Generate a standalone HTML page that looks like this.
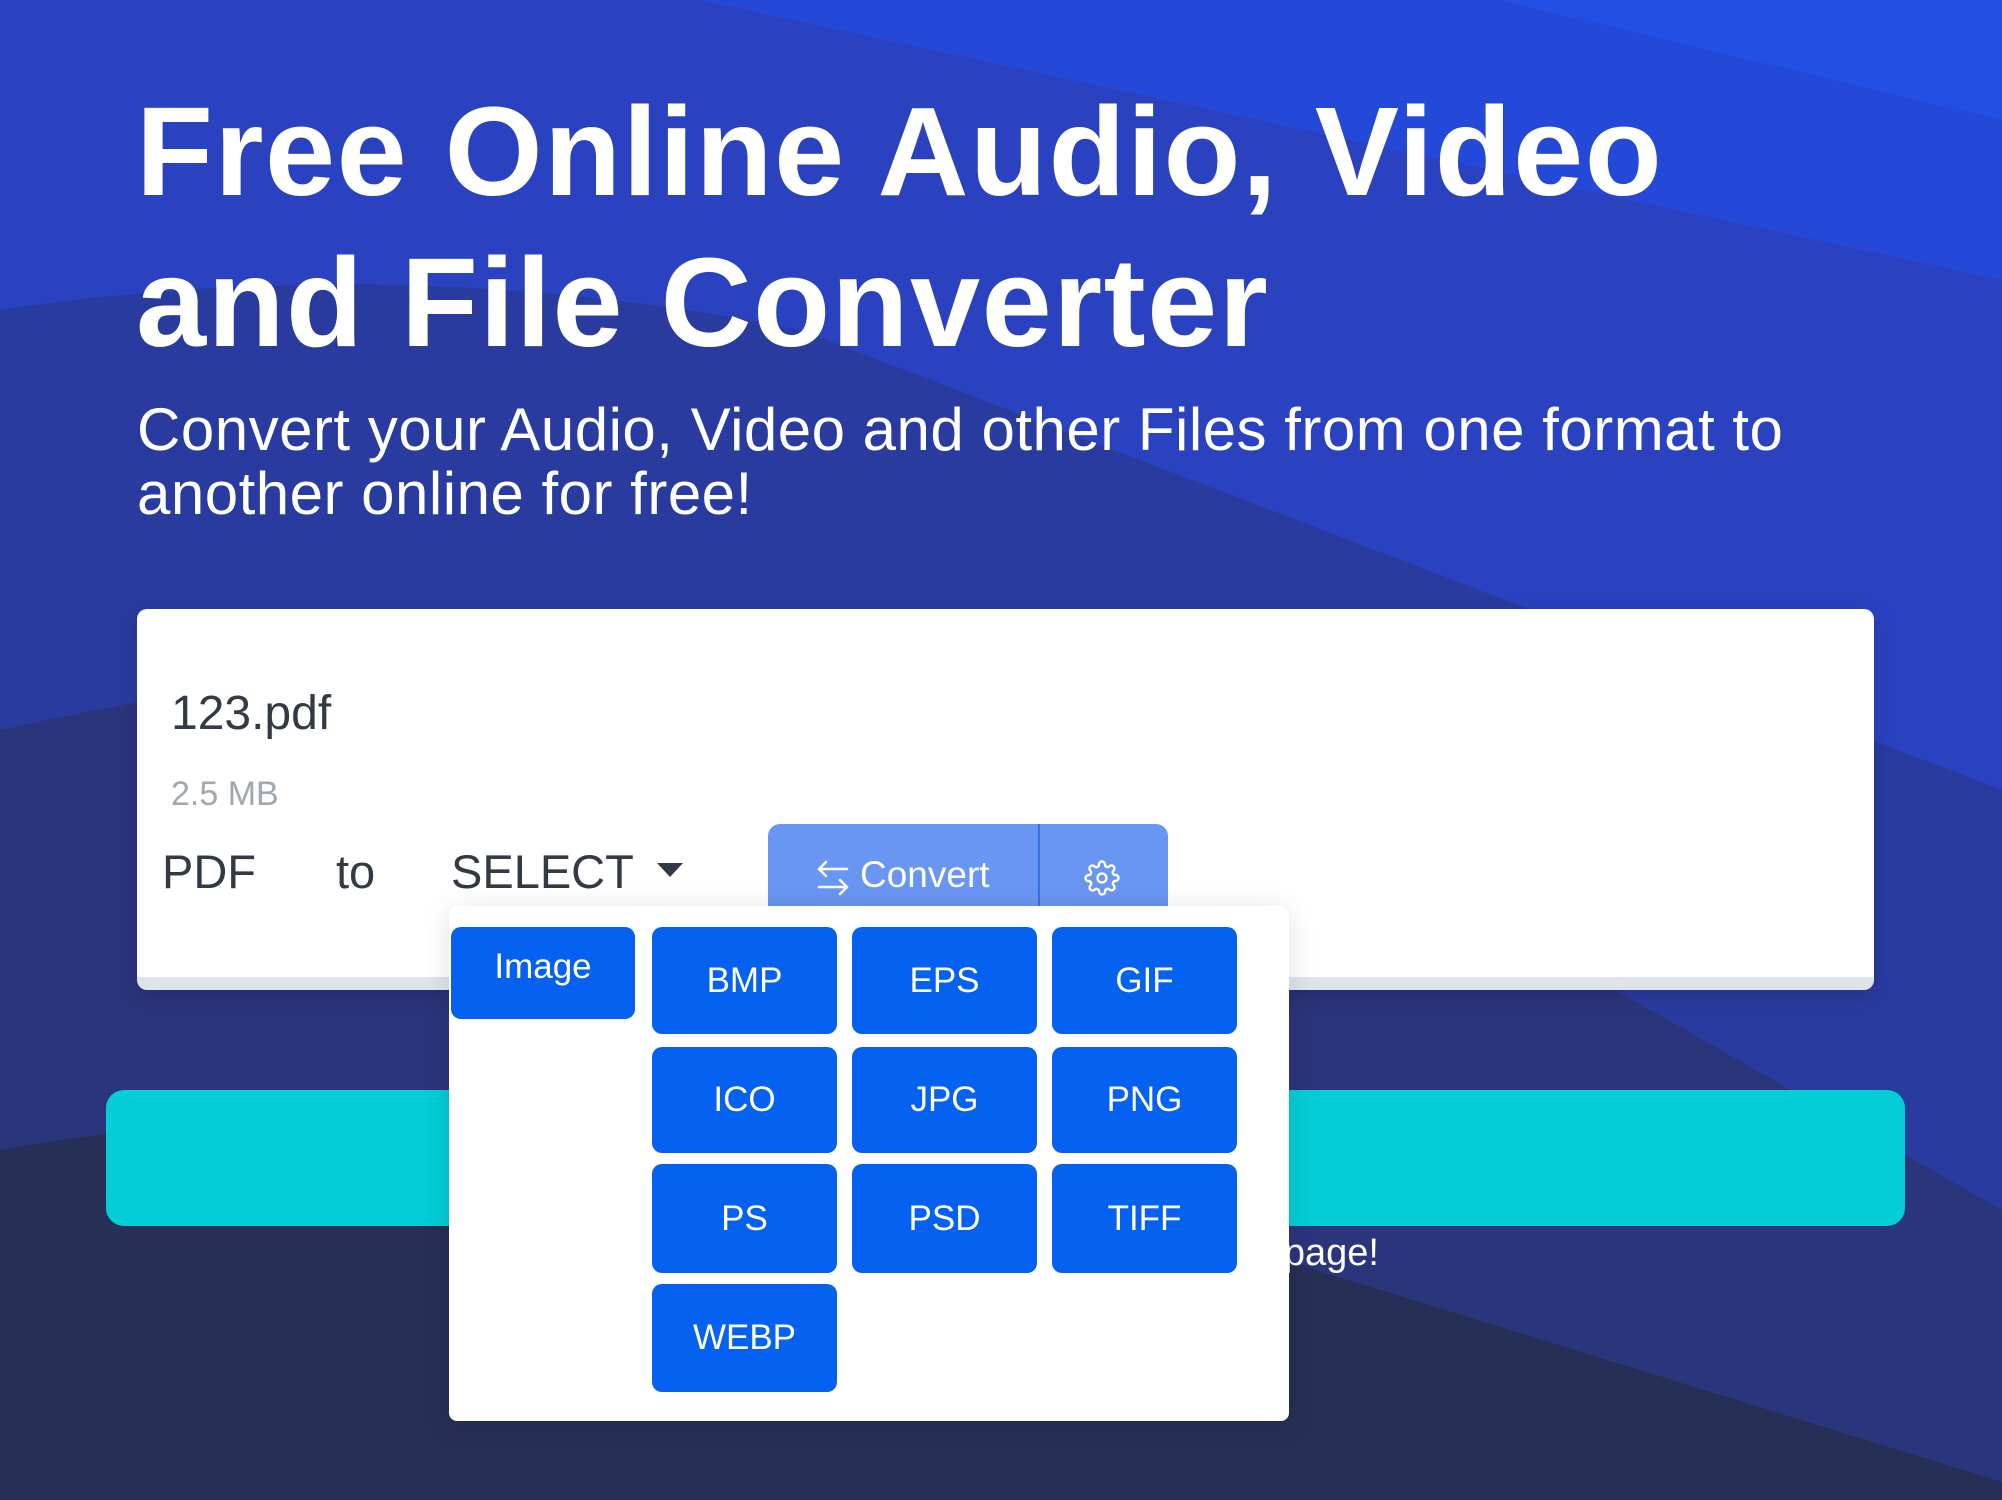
<!DOCTYPE html>
<html><head><meta charset="utf-8"><style>
*{margin:0;padding:0;box-sizing:border-box}
body{width:2002px;height:1500px;overflow:hidden;position:relative;font-family:"Liberation Sans",sans-serif;background:#2b357b}
.bg{position:absolute;left:0;top:0}
.abs{position:absolute}
h1{position:absolute;left:136px;top:76px;color:#fff;font-size:126px;font-weight:bold;line-height:151px;letter-spacing:1.5px;white-space:nowrap}
.sub{position:absolute;left:137px;top:398px;color:#fff;font-size:60px;line-height:64px;letter-spacing:0.5px;white-space:nowrap}
.card{position:absolute;left:137px;top:609px;width:1737px;height:381px;background:#fff;border-radius:10px;border-bottom:13px solid #dfe3ea;box-shadow:0 6px 20px rgba(0,0,0,.15)}
.t{position:absolute;color:#333a44;white-space:nowrap}
.btn{position:absolute;background:#0561f0;color:#fff;border-radius:10px;display:flex;align-items:center;justify-content:center;font-size:35px}
</style></head><body>
<svg class="bg" width="2002" height="1500">
<rect width="2002" height="1500" fill="#2b357b"/>
<path d="M0,730 Q500,620 1000,640 L2002,1210 L2002,0 L0,0Z" fill="#293b9f"/>
<path d="M0,310 Q400,250 800,330 L2002,790 L2002,0 L0,0Z" fill="#2a42bf"/>
<path d="M700,0 L2002,0 L2002,280 Z" fill="#2449d9"/>
<path d="M1500,0 L2002,0 L2002,120 Z" fill="#234fe3"/>
<path d="M0,1150 Q400,1080 1000,1130 L1290,1262 L2002,1482 L2002,1500 L0,1500Z" fill="#262f55"/>
</svg>
<h1>Free Online Audio, Video<br>and File Converter</h1>
<div class="sub">Convert your Audio, Video and other Files from one format to<br>another online for free!</div>
<div class="abs" style="right:623px;top:1232px;color:#fff;font-size:38px;white-space:nowrap">Bookmark this page!</div>
<div class="abs" style="left:106px;top:1090px;width:1799px;height:136px;background:#03cdd6;border-radius:18px"></div>
<div class="card">
<div class="t" style="left:34px;top:77px;font-size:48px">123.pdf</div>
<div class="t" style="left:34px;top:166px;font-size:34px;color:#a0a8b0">2.5 MB</div>
<div class="t" style="left:25px;top:235px;font-size:47px">PDF</div>
<div class="t" style="left:199px;top:235px;font-size:47px">to</div>
<div class="t" style="left:314px;top:235px;font-size:47px">SELECT</div>
<svg class="abs" style="left:520px;top:254px" width="26" height="14"><path d="M0,0H26L13,14Z" fill="#333a44"/></svg>
<div class="abs" style="left:631px;top:215px;width:400px;height:100px;background:#6a96f3;border-radius:12px 12px 0 0">
<div class="abs" style="left:270px;top:0;width:2px;height:100px;background:#3a6fe8"></div>
<svg class="abs" style="left:48px;top:36px" width="34" height="36" fill="none" stroke="#fff" stroke-width="2.5" stroke-linecap="round" stroke-linejoin="round"><path d="M10,2L3,9L10,16M3,9H31M24,20L31,27L24,34M31,27H3"/></svg>
<div class="abs" style="left:92px;top:30px;color:#fff;font-size:37px">Convert</div>
<svg class="abs" style="left:316px;top:36px" width="36" height="36" viewBox="0 0 24 24" fill="none" stroke="#fff" stroke-width="1.6"><circle cx="12" cy="12" r="3"/><path d="M19.4 15a1.65 1.65 0 0 0 .33 1.820l.06.06a2 2 0 1 1-2.83 2.83l-.06-.06a1.65 1.65 0 0 0-1.82-.33 1.65 1.65 0 0 0-1 1.51V21a2 2 0 1 1-4 0v-.09A1.65 1.65 0 0 0 9 19.4a1.650 1.65 0 0 0-1.82.33l-.06.06a2 2 0 1 1-2.83-2.83l.06-.06a1.65 1.65 0 0 0 .33-1.82 1.65 1.65 0 0 0-1.51-1H3a2 2 0 1 1 0-4h.09A1.65 1.65 0 0 0 4.6 9a1.65 1.65 0 0 0-.33-1.82l-.06-.06a2 2 0 1 1 2.83-2.83l.06.06a1.65 1.65 0 0 0 1.82.33H9a1.65 1.65 0 0 0 1-1.51V3a2 2 0 1 1 4 0v.09a1.65 1.65 0 0 0 1 1.51 1.65 1.65 0 0 0 1.820-.33l.06-.06a2 2 0 1 1 2.83 2.83l-.06.06a1.65 1.65 0 0 0-.33 1.82V9a1.65 1.65 0 0 0 1.51 1H21a2 2 0 1 1 0 4h-.09a1.65 1.65 0 0 0-1.51 1z"/></svg>
</div>
</div>
<div class="abs" style="left:449px;top:906px;width:840px;height:515px;background:#fff;border-radius:8px;box-shadow:0 4px 30px rgba(0,0,0,.12)"></div>
<div class="btn" style="left:451px;top:927px;width:184px;height:92px;padding-bottom:12px">Image</div>
<div class="btn" style="left:652px;top:927px;width:185px;height:107px">BMP</div>
<div class="btn" style="left:852px;top:927px;width:185px;height:107px">EPS</div>
<div class="btn" style="left:1052px;top:927px;width:185px;height:107px">GIF</div>
<div class="btn" style="left:652px;top:1047px;width:185px;height:106px">ICO</div>
<div class="btn" style="left:852px;top:1047px;width:185px;height:106px">JPG</div>
<div class="btn" style="left:1052px;top:1047px;width:185px;height:106px">PNG</div>
<div class="btn" style="left:652px;top:1164px;width:185px;height:109px">PS</div>
<div class="btn" style="left:852px;top:1164px;width:185px;height:109px">PSD</div>
<div class="btn" style="left:1052px;top:1164px;width:185px;height:109px">TIFF</div>
<div class="btn" style="left:652px;top:1284px;width:185px;height:108px">WEBP</div>
</body></html>
